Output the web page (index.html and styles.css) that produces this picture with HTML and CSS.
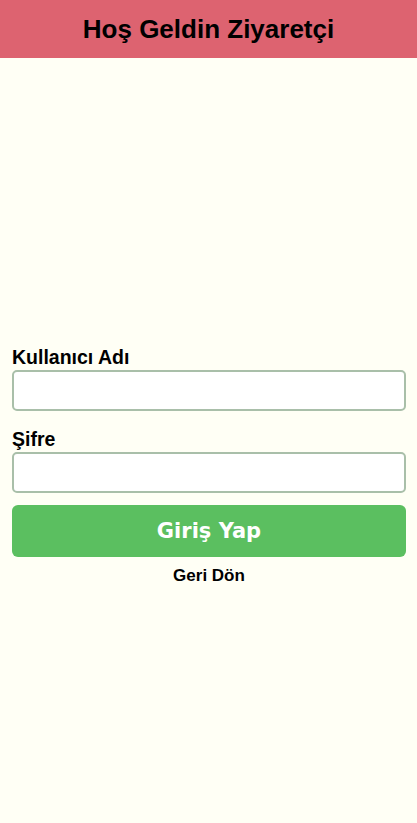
FILE: index.html
```html
<!DOCTYPE html>
<html lang="tr">
<head>
<meta charset="utf-8">
<title>Giriş</title>
<link rel="stylesheet" href="styles.css">
</head>
<body>
<header class="topbar"><h1 class="title">Hoş Geldin Ziyaretçi</h1></header>
<main class="content">
  <form class="login">
    <label class="label" for="user">Kullanıcı Adı</label>
    <input class="field" id="user" type="text">
    <label class="label label-second" for="pass">Şifre</label>
    <input class="field" id="pass" type="password">
    <button class="submit" type="button">Giriş Yap</button>
    <a class="back" href="#">Geri Dön</a>
  </form>
</main>
</body>
</html>
```
FILE: styles.css
```css
html, body {
  margin: 0;
  padding: 0;
  background: #fffff5;
  height: 100%;
}
body {
  font-family: "Liberation Sans", Arial, sans-serif;
  color: #000;
}
.topbar {
  height: 58px;
  background: #dd6370;
  display: flex;
  align-items: center;
  justify-content: center;
}
.title {
  margin: 0;
  font-size: 26px;
  font-weight: bold;
  line-height: 30px;
}
.content {
  padding: 288px 11px 0 12px;
}
.login {
  display: flex;
  flex-direction: column;
}
.label {
  font-size: 19.5px;
  font-weight: bold;
  line-height: 23px;
  margin-bottom: 1px;
}
.label-second {
  margin-top: 17px;
}
.field {
  box-sizing: border-box;
  height: 41px;
  border: 2px solid #a9bfa9;
  border-radius: 5px;
  background: #fff;
  margin: 0;
  padding: 0 10px;
  font-size: 16px;
}
.submit {
  margin-top: 12px;
  height: 52px;
  border: none;
  border-radius: 6px;
  background: #5bbf60;
  color: #fff;
  font-family: "DejaVu Sans", Verdana, sans-serif;
  font-weight: bold;
  font-size: 21px;
  cursor: pointer;
}
.back {
  margin-top: 9px;
  align-self: center;
  font-size: 17px;
  font-weight: bold;
  line-height: 20px;
  color: #000;
  text-decoration: none;
}
```
